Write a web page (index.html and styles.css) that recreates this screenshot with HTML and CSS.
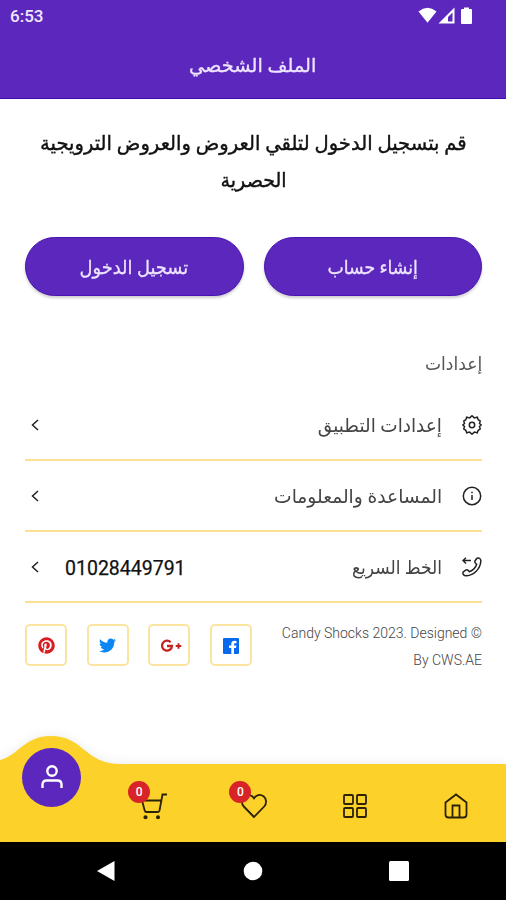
FILE: index.html
```html
<!DOCTYPE html>
<html lang="ar" dir="rtl">
<head>
<meta charset="utf-8">
<title>الملف الشخصي</title>
<link rel="stylesheet" href="styles.css">
</head>
<body>
<div class="app">
  <header class="header">
    <div class="status" dir="ltr">
      <span class="clock">6:53</span>
      <svg class="status-icons" width="56" height="18" viewBox="0 0 56 18" fill="#fff">
        <path d="M.5 4.500Q9.500-2.800 18.500 4.500L9.500 15.800Z"/>
        <path fill-rule="evenodd" d="M36.500.5V16.500H20.500ZM34.500 5.500L30 10V14.500H34.500Z"/>
        <path d="M46 .5h5v1.500h2a1 1 0 0 1 1 1V16a1 1 0 0 1-1 1h-9a1 1 0 0 1-1-1V3a1 1 0 0 1 1-1h2Z"/>
      </svg>
    </div>
    <h1 class="title"><span class="fit fit-title">الملف الشخصي</span></h1>
  </header>

  <main class="content">
    <p class="intro">
      <span class="fit fit-intro">قم بتسجيل الدخول لتلقي العروض والعروض الترويجية</span>
      <span class="fit fit-intro-end">الحصرية</span>
    </p>
    <div class="actions">
      <button class="btn"><span class="fit fit-signup">إنشاء حساب</span></button>
      <button class="btn"><span class="fit fit-login">تسجيل الدخول</span></button>
    </div>

    <h2 class="section"><span class="fit fit-section">إعدادات</span></h2>
    <ul class="list">
      <li class="row">
        <svg class="row-icon" viewBox="0 0 20 20"><path d="M10 .8L12.300 2.900L15.300 2.200L16.200 4.700L18.200 6L17.500 8.500L19.200 10L17.500 11.500L18.200 14L16.200 15.300L15.300 17.800L12.300 17.100L10 19.200L7.700 17.100L4.700 17.800L3.800 15.300L1.800 14L2.500 11.500L.8 10L2.500 8.500L1.800 6L3.800 4.700L4.700 2.200L7.700 2.900Z"/><circle cx="10" cy="10" r="2.700"/></svg>
        <span class="label"><span class="fit fit-row1">إعدادات التطبيق</span></span>
        <svg class="chevron" viewBox="0 0 8 12"><path d="M7 1L1.500 6L7 11"/></svg>
      </li>
      <li class="row">
        <svg class="row-icon" viewBox="0 0 20 20"><circle cx="10" cy="10" r="8.700"/><path d="M10 9V14M10 5.800V7.200"/></svg>
        <span class="label"><span class="fit fit-row2">المساعدة والمعلومات</span></span>
        <svg class="chevron" viewBox="0 0 8 12"><path d="M7 1L1.500 6L7 11"/></svg>
      </li>
      <li class="row">
        <svg class="row-icon" viewBox="0 0 20 20"><path d="M15 1.200C17 .3 19 1.800 18.800 4.500C18.200 12 12 18.200 4.500 18.800C1.800 19 .3 17 1.200 15L3.700 13.100C5 12.300 6.500 13.500 7.300 14.700C10.500 13.700 13.700 10.500 14.700 7.300C13.500 6.500 12.300 5 13.100 3.700Z"/><path d="M9 3.500H1M4 .8L1 3.500L4 6.500"/></svg>
        <span class="label"><span class="fit fit-row3">الخط السريع</span></span>
        <span class="phone" dir="ltr">01028449791</span>
        <svg class="chevron" viewBox="0 0 8 12"><path d="M7 1L1.500 6L7 11"/></svg>
      </li>
    </ul>

    <footer class="footer">
      <p class="copy">© Candy Shocks 2023. Designed By CWS.AE</p>
      <div class="social" dir="ltr">
        <a class="tile"><svg width="17" height="17" viewBox="0 0 496 512"><path fill="#d91d20" d="M496 256c0 137-111 248-248 248-25.600 0-50.200-3.900-73.400-11.100 10.100-16.500 25.200-43.500 30.800-65 3-11.600 15.400-59 15.400-59 8.100 15.400 31.700 28.500 56.800 28.500 74.800 0 128.700-68.800 128.700-154.300 0-81.900-66.900-143.200-152.900-143.200-107 0-163.900 71.800-163.900 150.100 0 36.400 19.400 81.700 50.300 96.100 4.700 2.200 7.200 1.200 8.300-3.300.8-3.400 5-20.300 6.900-28.100.6-2.500.3-4.700-1.700-7.100-10.100-12.500-18.300-35.300-18.300-56.600 0-54.700 41.400-107.600 112-107.600 60.900 0 103.600 41.500 103.600 100.900 0 67.100-33.900 113.600-78 113.600-24.300 0-42.600-20.100-36.700-44.800 7-29.500 20.500-61.300 20.500-82.600 0-19-10.200-34.900-31.400-34.900-24.900 0-44.900 25.700-44.900 60.200 0 22 7.400 36.800 7.400 36.800s-24.500 103.800-29 123.200c-5 21.400-3 51.600-.9 71.200C65.400 450.900 0 361.100 0 256 0 119 111 8 248 8s248 111 248 248z"/></svg></a>
        <a class="tile"><svg width="17" height="17" viewBox="0 0 512 512"><path fill="#0b86f5" d="M459.400 151.700c.3 4.500.3 9.100.3 13.600 0 138.700-105.600 298.600-298.600 298.600-59.500 0-114.700-17.200-161.100-47.100 8.400 1 16.600 1.300 25.300 1.300 49.100 0 94.200-16.600 130.300-44.800-46.100-1-84.800-31.200-98.100-72.800 6.500 1 13 1.600 19.800 1.600 9.400 0 18.800-1.300 27.600-3.600-48.100-9.700-84.100-52-84.100-103v-1.300c14 7.800 30.200 12.700 47.400 13.300-28.300-18.800-46.800-51-46.800-87.400 0-19.500 5.200-37.400 14.300-53 51.700 63.700 129.300 105.300 216.400 109.800-1.600-7.800-2.600-15.900-2.600-24 0-57.800 46.800-104.900 104.900-104.900 30.200 0 57.500 12.700 76.700 33.100 23.700-4.500 46.500-13.300 66.600-25.300-7.800 24.400-24.400 44.800-46.100 57.800 21.100-2.300 41.600-8.100 60.400-16.200-14.300 20.800-32.200 39.300-52.600 54.300z"/></svg></a>
        <a class="tile tile-google"><svg width="22" height="14" viewBox="0 0 22 14"><path fill="none" stroke="#c5221f" stroke-width="2.300" d="M10.600 3.200A5 5 0 1 0 12 7H7"/><path stroke="#c5221f" stroke-width="2" d="M18.500 4.200V9.800M15.700 7H21.300"/></svg></a>
        <a class="tile"><svg width="16" height="16" viewBox="0 0 16 16"><path fill="#0868ee" fill-rule="evenodd" d="M1 0H15Q16 0 16 1V15Q16 16 15 16H11V10H13L13.400 7.600H11V6.200Q11 5.200 12.100 5.200H13.500V3Q8.300 2 8.300 5.800V7.600H6V10H8.300V16H1Q0 16 0 15V1Q0 0 1 0Z"/></svg></a>
      </div>
    </footer>
  </main>

  <nav class="tabs">
    <svg class="wave" viewBox="0 0 506 106"><path d="M0 24C18 20 24 0 51 0C84 0 84 28 121 28H506V106H0Z"/></svg>
    <a class="tab"><svg width="26" height="28" viewBox="0 0 26 28"><path d="M2.500 10.500L13 2.500L23.500 10.500V22.500Q23.500 25.500 20.500 25.500H5.500Q2.500 25.500 2.500 22.500ZM9.500 25V13.500H16.500V25"/></svg></a>
    <a class="tab"><svg width="26" height="26" viewBox="0 0 26 26"><rect x="2" y="2" width="9" height="9" rx="1"/><rect x="15" y="2" width="9" height="9" rx="1"/><rect x="2" y="15" width="9" height="9" rx="1"/><rect x="15" y="15" width="9" height="9" rx="1"/></svg></a>
    <a class="tab"><svg width="28" height="26" viewBox="0 0 28 26"><path d="M14 24L3.800 13.500C1 10.500 1.500 5.500 4.500 3.300C8 .8 12 2 14 5.300C16 2 20 .8 23.500 3.300C26.500 5.500 27 10.500 24.200 13.500Z"/></svg><span class="badge">0</span></a>
    <a class="tab"><svg width="30" height="28" viewBox="0 0 30 28"><path d="M29 2.500H24.500L21.500 18.500Q21.300 20 19.800 20H8.500Q7 20 6.700 18.500L4 8.500H23.300"/><circle class="wheel" cx="7.500" cy="25.200" r="2"/><circle class="wheel" cx="20" cy="25.200" r="2"/></svg><span class="badge">0</span></a>
    <a class="tab"><span class="current"><svg width="24" height="26" viewBox="0 0 24 26"><circle cx="12" cy="7" r="4.700"/><path d="M2.500 24V20.500Q2.500 16.500 6.500 16.500H17.500Q21.500 16.500 21.500 20.500V24"/></svg></span></a>
  </nav>

  <div class="system" dir="ltr">
    <svg width="20" height="22" viewBox="0 0 20 22"><path d="M1 11L18.500 1V21Z"/></svg>
    <svg width="20" height="20" viewBox="0 0 20 20"><circle cx="10" cy="10" r="9.300"/></svg>
    <svg width="20" height="20" viewBox="0 0 20 20"><rect width="20" height="20" rx="1.500"/></svg>
  </div>
</div>
</body>
</html>
```
FILE: styles.css
```css
* { box-sizing: border-box; }
body {
  margin: 0;
  background: #fff;
  font-family: Roboto, "DejaVu Sans", sans-serif;
  color: #111;
}
h1, h2, p, ul { margin: 0; padding: 0; font-weight: 400; list-style: none; }
svg { display: block; flex: none; }
.app { width: 506px; height: 900px; display: flex; flex-direction: column; overflow: hidden; }

.header { height: 98.500px; background: #5b27bd; border-bottom: 1px solid #3b0bab; color: #fff; }
.status { height: 33px; padding: 0 32px 0 10px; display: flex; align-items: center; justify-content: space-between; }
.clock { font: 500 17px/33px Roboto, sans-serif; color: #f0e8ff; }
.status-icons { margin-top: -2px; }
.title { height: 65px; display: flex; align-items: center; justify-content: center; font-size: 19px; color: #eee4ff; -webkit-text-stroke: .3px #eee4ff; }

.fit { display: inline-block; white-space: nowrap; }
.fit-title { transform: scaleX(1.016); }
.fit-intro { transform: scaleX(.977); }
.fit-intro-end { transform: scaleX(.955); }
.fit-signup { transform: scaleX(.91); }
.fit-login { transform: scaleX(.94); }
.fit-section, .fit-row1, .fit-row2, .fit-row3 { transform-origin: right center; }
.fit-section { transform: scaleX(.95); }
.fit-row1 { transform: scaleX(.97); }
.fit-row2 { transform: scaleX(.982); }
.fit-row3 { transform: scaleX(.9); }

.content { flex: 1; padding: 26px 24px 0 25px; }
.intro { display: flex; flex-direction: column; align-items: center; font-size: 20px; line-height: 37px; -webkit-text-stroke: .4px #111; }
.actions { display: flex; gap: 20px; margin-top: 38px; }
.btn {
  flex: 1; height: 59px; padding: 2px 0 0; border: 1px solid #4813b3; border-radius: 30px;
  background: #5b27bd; color: #eee4ff; font: 19px/55px Roboto, "DejaVu Sans", sans-serif;
  box-shadow: 0 2px 3px rgba(0, 0, 0, .2); -webkit-text-stroke: .3px #eee4ff;
}
.section { margin-top: 50px; height: 36px; line-height: 36px; font-size: 18px; color: #555; }
.list { margin-top: 8px; }
.row { height: 71px; padding-top: 2px; display: flex; align-items: center; border-bottom: 2px solid #fbe093; font-size: 19px; color: #444; }
.row-icon { width: 20px; height: 20px; fill: none; stroke: #222; stroke-width: 1.500; }
.label { flex: 1; padding-right: 20px; }
.chevron { width: 8px; height: 12px; margin: 0 0 0 6px; fill: none; stroke: #222; stroke-width: 1.500; }
.phone { margin-left: 26px; padding-top: 2px; font: 19.500px Roboto, sans-serif; color: #111; -webkit-text-stroke: .25px #111; }
.footer { display: flex; justify-content: space-between; padding-top: 17px; }
.copy { width: 202px; font: 300 14px/27px Roboto, sans-serif; color: #444; }
.social { display: flex; gap: 19.500px; padding-top: 4px; }
.tile { width: 42px; height: 42px; padding-top: 2px; border: 2px solid #fbe3a0; border-radius: 5px; display: flex; align-items: center; justify-content: center; }
.tile-google { padding-left: 3px; }

.tabs { position: relative; height: 78px; display: flex; padding-top: 6px; }
.wave { position: absolute; left: 0; bottom: 0; width: 506px; height: 106px; fill: #fcd12a; filter: drop-shadow(0 -2px 4px rgba(0, 0, 0, .06)); }
.tab { position: relative; flex: 1; display: flex; align-items: center; justify-content: center; left: 1px; }
.tab svg { fill: none; stroke: #2b2208; stroke-width: 1.800; }
.tab .wheel { fill: #2b2208; stroke: none; }
.badge {
  position: absolute; left: 26px; top: 11px; width: 22px; height: 22px; border-radius: 50%;
  background: #d82428; color: #fff; font: 500 12px/22px Roboto, sans-serif; text-align: center;
}
.current { width: 59px; height: 59px; border-radius: 50%; background: #5b27bd; display: flex; align-items: center; justify-content: center; transform: translateY(-29px); }
.current svg { stroke: #fff; stroke-width: 2.400; }

.system { height: 58px; background: #000; display: flex; align-items: center; justify-content: space-between; padding: 0 97px 0 96px; }
.system svg { fill: #fff; }
```
